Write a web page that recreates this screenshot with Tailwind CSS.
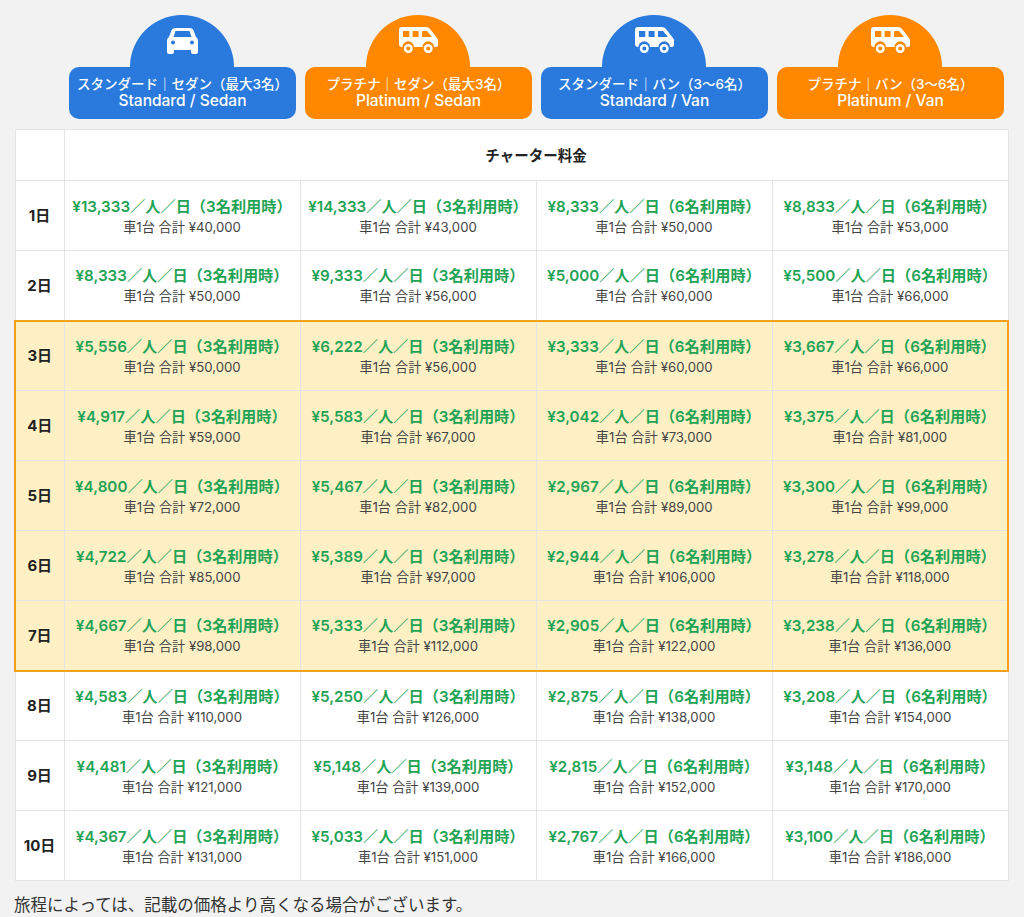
<!DOCTYPE html>
<html lang="ja">
<head>
  <meta charset="UTF-8" />
  <meta name="viewport" content="width=device-width, initial-scale=1.0"/>
  <title>チャーター料金</title>
  <script src="https://cdn.jsdelivr.net/npm/@tailwindcss/browser@4"></script>
</head>
<body class="bg-[#f2f2f2] font-['Inter','Noto_Sans_CJK_JP',sans-serif] text-[#222] h-[917px] overflow-hidden">
  <div class="px-[14px] pt-[15px]">

    <!-- Vehicle cards -->
    <div class="grid grid-cols-4 gap-[9px] pl-[55px] pr-[6px] mb-[10px]">
      <div class="flex flex-col items-center">
        <div class="w-[104px] h-[52px] mr-[1px] rounded-t-full bg-[#2a7ade] flex justify-center pt-[13px]">
          <svg class="w-[31px] h-[26px]" viewBox="0 0 31 26" fill="#fff"><path fill-rule="evenodd" d="M8 0H23a4 4 0 0 1 3.6 2.5L29 9a4 4 0 0 1 2 3.5V24a2 2 0 0 1-2 2H26a2 2 0 0 1-2-2V22H7V24a2 2 0 0 1-2 2H2a2 2 0 0 1-2-2V12.5a4 4 0 0 1 2-3.5L4.4 2.5A4 4 0 0 1 8 0ZM8.5 3H22.5L24.5 9H6.5ZM6 12.5a2 2 0 1 0 0 4a2 2 0 1 0 0-4ZM25 12.5a2 2 0 1 0 0 4a2 2 0 1 0 0-4Z"/></svg>
        </div>
        <div class="w-full h-[52px] rounded-[10px] bg-[#2a7ade] text-white text-center text-[13.5px] leading-[17px] font-medium pt-[9px]">
          <div>スタンダード｜セダン（最大3名）</div>
          <div class="text-[15.5px] leading-[16px]">Standard / Sedan</div>
        </div>
      </div>
      <div class="flex flex-col items-center">
        <div class="w-[104px] h-[52px] mr-[1px] rounded-t-full bg-[#ff8800] flex justify-center pt-[12px]">
          <svg class="w-[39px] h-[26px]" viewBox="0 0 39 26" fill="#fff"><path fill-rule="evenodd" d="M3 0H27a5 5 0 0 1 4 2L38 11a4 4 0 0 1 1 2.5V18a2 2 0 0 1-2 2H35a5.7 5.7 0 0 0-11.5 0H15a5.7 5.7 0 0 0-11.5 0H3a3 3 0 0 1-3-3V3a3 3 0 0 1 3-3ZM4 4V10H10.3V4ZM13.6 4V10H19.6V4ZM23 4V10H33L28 4Z"/><path fill-rule="evenodd" d="M9.3 17a4.5 4.5 0 1 0 0 9a4.5 4.5 0 1 0 0-9ZM9.3 19.5a2 2 0 1 1 0 4a2 2 0 1 1 0-4ZM29.2 17a4.5 4.5 0 1 0 0 9a4.5 4.5 0 1 0 0-9ZM29.2 19.5a2 2 0 1 1 0 4a2 2 0 1 1 0-4Z"/></svg>
        </div>
        <div class="w-full h-[52px] rounded-[10px] bg-[#ff8800] text-white text-center text-[13.5px] leading-[17px] font-medium pt-[9px]">
          <div>プラチナ｜セダン（最大3名）</div>
          <div class="text-[15.5px] leading-[16px]">Platinum / Sedan</div>
        </div>
      </div>
      <div class="flex flex-col items-center">
        <div class="w-[104px] h-[52px] mr-[1px] rounded-t-full bg-[#2a7ade] flex justify-center pt-[12px]">
          <svg class="w-[39px] h-[26px]" viewBox="0 0 39 26" fill="#fff"><path fill-rule="evenodd" d="M3 0H27a5 5 0 0 1 4 2L38 11a4 4 0 0 1 1 2.5V18a2 2 0 0 1-2 2H35a5.7 5.7 0 0 0-11.5 0H15a5.7 5.7 0 0 0-11.5 0H3a3 3 0 0 1-3-3V3a3 3 0 0 1 3-3ZM4 4V10H10.3V4ZM13.6 4V10H19.6V4ZM23 4V10H33L28 4Z"/><path fill-rule="evenodd" d="M9.3 17a4.5 4.5 0 1 0 0 9a4.5 4.5 0 1 0 0-9ZM9.3 19.5a2 2 0 1 1 0 4a2 2 0 1 1 0-4ZM29.2 17a4.5 4.5 0 1 0 0 9a4.5 4.5 0 1 0 0-9ZM29.2 19.5a2 2 0 1 1 0 4a2 2 0 1 1 0-4Z"/></svg>
        </div>
        <div class="w-full h-[52px] rounded-[10px] bg-[#2a7ade] text-white text-center text-[13.5px] leading-[17px] font-medium pt-[9px]">
          <div>スタンダード｜バン（3〜6名）</div>
          <div class="text-[15.5px] leading-[16px]">Standard / Van</div>
        </div>
      </div>
      <div class="flex flex-col items-center">
        <div class="w-[104px] h-[52px] mr-[1px] rounded-t-full bg-[#ff8800] flex justify-center pt-[12px]">
          <svg class="w-[39px] h-[26px]" viewBox="0 0 39 26" fill="#fff"><path fill-rule="evenodd" d="M3 0H27a5 5 0 0 1 4 2L38 11a4 4 0 0 1 1 2.5V18a2 2 0 0 1-2 2H35a5.7 5.7 0 0 0-11.5 0H15a5.7 5.7 0 0 0-11.5 0H3a3 3 0 0 1-3-3V3a3 3 0 0 1 3-3ZM4 4V10H10.3V4ZM13.6 4V10H19.6V4ZM23 4V10H33L28 4Z"/><path fill-rule="evenodd" d="M9.3 17a4.5 4.5 0 1 0 0 9a4.5 4.5 0 1 0 0-9ZM9.3 19.5a2 2 0 1 1 0 4a2 2 0 1 1 0-4ZM29.2 17a4.5 4.5 0 1 0 0 9a4.5 4.5 0 1 0 0-9ZM29.2 19.5a2 2 0 1 1 0 4a2 2 0 1 1 0-4Z"/></svg>
        </div>
        <div class="w-full h-[52px] rounded-[10px] bg-[#ff8800] text-white text-center text-[13.5px] leading-[17px] font-medium pt-[9px]">
          <div>プラチナ｜バン（3〜6名）</div>
          <div class="text-[15.5px] leading-[16px]">Platinum / Van</div>
        </div>
      </div>
    </div>

    <!-- Price table -->
    <table class="w-[993px] table-fixed border-collapse text-center [&_td]:border [&_td]:border-[#e4e4e4] [&_th]:border [&_th]:border-[#e4e4e4] [&_td]:h-[70px] [&_td]:pt-[2px] [&_td]:leading-[20px] [&_td_b]:block [&_td_b]:text-[15.2px] [&_td_b]:font-semibold [&_td_b]:text-[#1fa355] [&_td_span]:block [&_td_span]:text-[13.2px] [&_td_span]:text-[#444] [&_th]:pt-[1px] [&_th]:text-[15px] [&_th]:font-bold">
      <colgroup>
        <col class="w-[49px]" /><col class="w-[236px]" /><col class="w-[236px]" /><col class="w-[236px]" /><col class="w-[236px]" />
      </colgroup>
      <thead class="bg-white">
        <tr class="h-[51px]"><th></th><th colspan="4" class="!text-[14.5px]">チャーター料金</th></tr>
      </thead>
      <tbody class="bg-white">
        <tr><th>1日</th><td><b>¥13,333／人／日（3名利用時）</b><span>車1台 合計 ¥40,000</span></td><td><b>¥14,333／人／日（3名利用時）</b><span>車1台 合計 ¥43,000</span></td><td><b>¥8,333／人／日（6名利用時）</b><span>車1台 合計 ¥50,000</span></td><td><b>¥8,833／人／日（6名利用時）</b><span>車1台 合計 ¥53,000</span></td></tr>
        <tr><th>2日</th><td><b>¥8,333／人／日（3名利用時）</b><span>車1台 合計 ¥50,000</span></td><td><b>¥9,333／人／日（3名利用時）</b><span>車1台 合計 ¥56,000</span></td><td><b>¥5,000／人／日（6名利用時）</b><span>車1台 合計 ¥60,000</span></td><td><b>¥5,500／人／日（6名利用時）</b><span>車1台 合計 ¥66,000</span></td></tr>
      </tbody>
      <tbody class="bg-[#fdf0c4] border-2 border-[#f9a11b]">
        <tr><th>3日</th><td><b>¥5,556／人／日（3名利用時）</b><span>車1台 合計 ¥50,000</span></td><td><b>¥6,222／人／日（3名利用時）</b><span>車1台 合計 ¥56,000</span></td><td><b>¥3,333／人／日（6名利用時）</b><span>車1台 合計 ¥60,000</span></td><td><b>¥3,667／人／日（6名利用時）</b><span>車1台 合計 ¥66,000</span></td></tr>
        <tr><th>4日</th><td><b>¥4,917／人／日（3名利用時）</b><span>車1台 合計 ¥59,000</span></td><td><b>¥5,583／人／日（3名利用時）</b><span>車1台 合計 ¥67,000</span></td><td><b>¥3,042／人／日（6名利用時）</b><span>車1台 合計 ¥73,000</span></td><td><b>¥3,375／人／日（6名利用時）</b><span>車1台 合計 ¥81,000</span></td></tr>
        <tr><th>5日</th><td><b>¥4,800／人／日（3名利用時）</b><span>車1台 合計 ¥72,000</span></td><td><b>¥5,467／人／日（3名利用時）</b><span>車1台 合計 ¥82,000</span></td><td><b>¥2,967／人／日（6名利用時）</b><span>車1台 合計 ¥89,000</span></td><td><b>¥3,300／人／日（6名利用時）</b><span>車1台 合計 ¥99,000</span></td></tr>
        <tr><th>6日</th><td><b>¥4,722／人／日（3名利用時）</b><span>車1台 合計 ¥85,000</span></td><td><b>¥5,389／人／日（3名利用時）</b><span>車1台 合計 ¥97,000</span></td><td><b>¥2,944／人／日（6名利用時）</b><span>車1台 合計 ¥106,000</span></td><td><b>¥3,278／人／日（6名利用時）</b><span>車1台 合計 ¥118,000</span></td></tr>
        <tr><th>7日</th><td><b>¥4,667／人／日（3名利用時）</b><span>車1台 合計 ¥98,000</span></td><td><b>¥5,333／人／日（3名利用時）</b><span>車1台 合計 ¥112,000</span></td><td><b>¥2,905／人／日（6名利用時）</b><span>車1台 合計 ¥122,000</span></td><td><b>¥3,238／人／日（6名利用時）</b><span>車1台 合計 ¥136,000</span></td></tr>
      </tbody>
      <tbody class="bg-white">
        <tr><th>8日</th><td><b>¥4,583／人／日（3名利用時）</b><span>車1台 合計 ¥110,000</span></td><td><b>¥5,250／人／日（3名利用時）</b><span>車1台 合計 ¥126,000</span></td><td><b>¥2,875／人／日（6名利用時）</b><span>車1台 合計 ¥138,000</span></td><td><b>¥3,208／人／日（6名利用時）</b><span>車1台 合計 ¥154,000</span></td></tr>
        <tr><th>9日</th><td><b>¥4,481／人／日（3名利用時）</b><span>車1台 合計 ¥121,000</span></td><td><b>¥5,148／人／日（3名利用時）</b><span>車1台 合計 ¥139,000</span></td><td><b>¥2,815／人／日（6名利用時）</b><span>車1台 合計 ¥152,000</span></td><td><b>¥3,148／人／日（6名利用時）</b><span>車1台 合計 ¥170,000</span></td></tr>
        <tr><th>10日</th><td><b>¥4,367／人／日（3名利用時）</b><span>車1台 合計 ¥131,000</span></td><td><b>¥5,033／人／日（3名利用時）</b><span>車1台 合計 ¥151,000</span></td><td><b>¥2,767／人／日（6名利用時）</b><span>車1台 合計 ¥166,000</span></td><td><b>¥3,100／人／日（6名利用時）</b><span>車1台 合計 ¥186,000</span></td></tr>
      </tbody>
    </table>

    <p class="mt-[12px] text-[16.5px] leading-[24px] text-[#333]">旅程によっては、記載の価格より高くなる場合がございます。</p>
  </div>
</body>
</html>
